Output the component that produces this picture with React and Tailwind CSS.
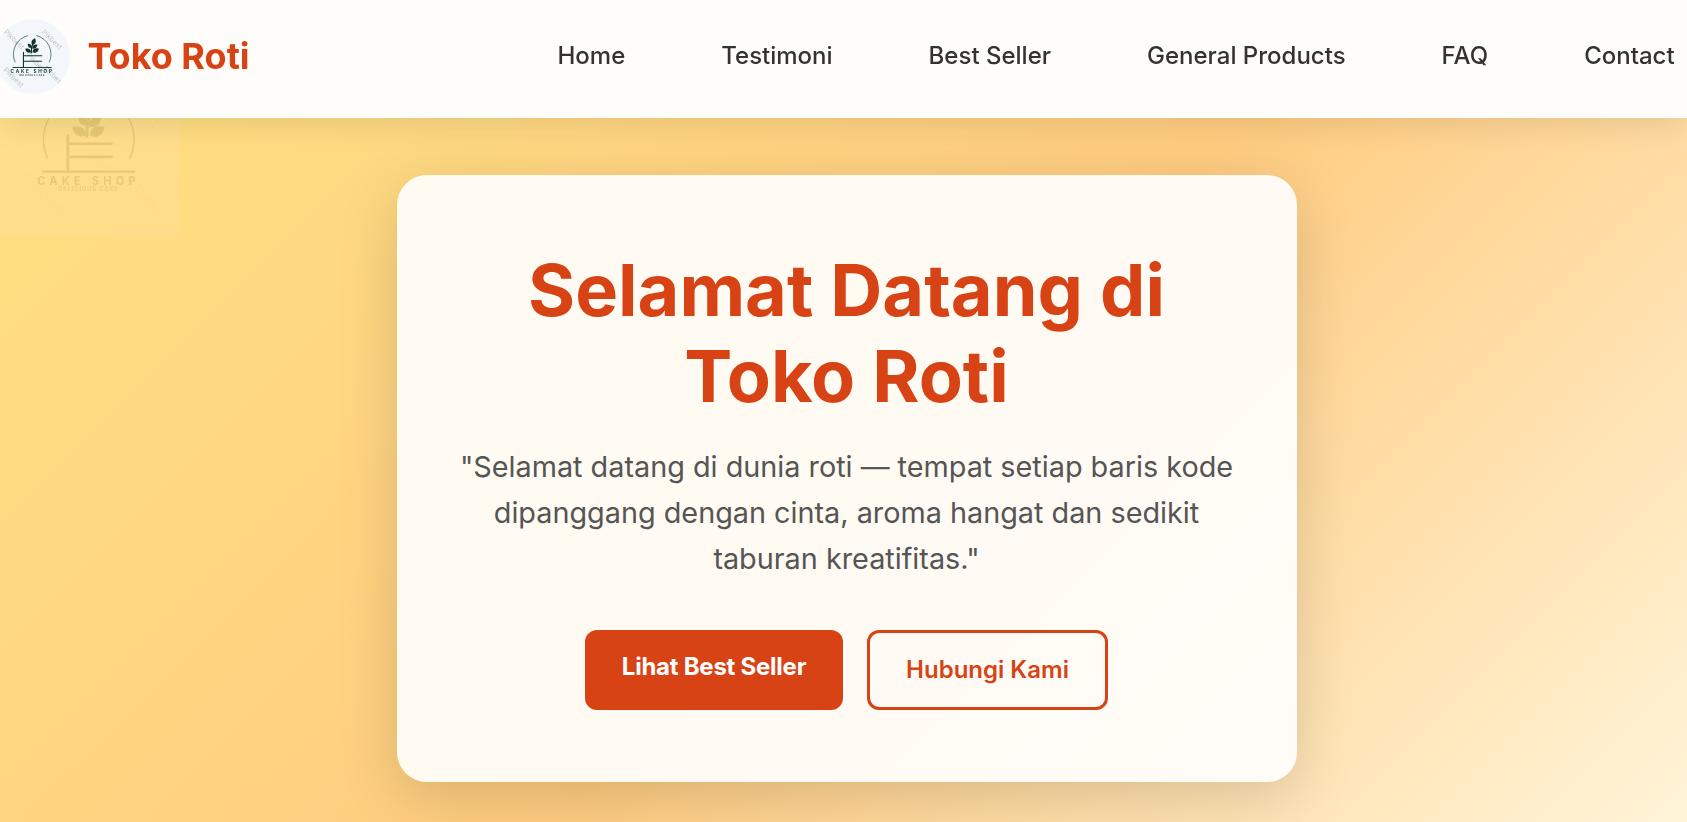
const links = ["Home", "Testimoni", "Best Seller", "General Products", "FAQ", "Contact"];

function Leaf({ x, y, r, s = 1 }) {
  return (
    <path
      d="M0 0C-6 -4 -6 -11 0 -16C6 -11 6 -4 0 0Z"
      transform={`translate(${x} ${y}) rotate(${r}) scale(${s})`}
      fill="currentColor"
    />
  );
}

function Mark({ x, y }) {
  return (
    <text transform={`translate(${x} ${y}) rotate(44)`} fontSize="17">
      Pikbest
    </text>
  );
}

function Logo({ className, markOpacity, background }) {
  return (
    <svg viewBox="0 0 178 178" className={className} fontFamily="Inter, sans-serif">
      <rect width="178" height="178" fill={background} />
      <g fill="#8a8f94" opacity={markOpacity}>
        <Mark x={20} y={32} />
        <Mark x={110} y={32} />
        <Mark x={19} y={122} />
        <Mark x={74} y={88} />
        <Mark x={114} y={118} />
      </g>
      <g fill="none" stroke="currentColor" strokeLinecap="round">
        <path d="M47.500 102A45 45 0 0 1 77 39.600M99 39.400A45 45 0 0 1 129 102" strokeWidth="1.500" />
        <path d="M67.500 79V115M67.500 87.300H111M67.500 100.300H111" strokeWidth="2.600" />
        <path d="M42.500 115H133.500" strokeWidth="2.300" />
        <path d="M86.500 80C86 72 87 64 90 58" strokeWidth="3" />
      </g>
      <Leaf x={88.5} y={62} r={22} s={1.08} />
      <Leaf x={87} y={69} r={-42} s={0.85} />
      <Leaf x={88.5} y={70} r={52} s={0.95} />
      <Leaf x={85.5} y={79} r={-58} s={1} />
      <Leaf x={89} y={79} r={61} s={1.08} />
      <text x="37" y="127.800" fontSize="11" fontWeight="700" textLength="98" fill="currentColor">
        CAKE SHOP
      </text>
      <text x="58" y="134.500" fontSize="5.600" fontWeight="600" textLength="59" fill="currentColor">
        DELICIOUS CAKE
      </text>
    </svg>
  );
}

export default function App() {
  return (
    <div className="flex h-[822px] flex-col overflow-hidden font-['Inter',sans-serif]">
      <header className="relative z-10 flex h-[118px] shrink-0 items-center justify-between bg-[#fffdfa] pr-[12.4px] pb-[6px] shadow-[0_6px_30px_rgba(0,0,0,0.1)]">
        <div className="-ml-[5px] flex items-center gap-[17.4px]">
          <Logo className="size-[75px] rounded-full text-[#12352c]" markOpacity={0.5} background="#f3f7fb" />
          <span className="text-[36px] font-bold text-[#d84315]">Toko Roti</span>
        </div>
        <nav className="flex gap-24 text-2xl font-medium text-[#333]">
          {links.map((l) => (
            <a key={l}>{l}</a>
          ))}
        </nav>
      </header>
      <section className="relative h-[822px] shrink-0 bg-[linear-gradient(135deg,#ffe082_0%,#ffcc80_50%,#fff8e1_100%)] pt-[57px] pl-[396.5px]">
        <Logo className="absolute -top-[62px] left-0 size-[179px] text-[#3d3a1e] opacity-12" markOpacity={0.25} background="#ffe6d2" />
        <main className="relative w-[900px] rounded-[30px] bg-white/90 px-[60px] py-[72px] text-center shadow-[0_15px_60px_rgba(0,0,0,0.15)]">
          <h1 className="mb-6 text-[72px] leading-[86.4px] font-bold text-[#d84315]">
            Selamat Datang di
            <br />
            Toko Roti
          </h1>
          <p className="mb-12 text-[28.8px] leading-[46.08px] text-[#555]">
            "Selamat datang di dunia roti — tempat setiap baris kode dipanggang dengan cinta, aroma hangat dan sedikit taburan kreatifitas."
          </p>
          <div className="flex justify-center gap-6 text-2xl leading-[38.4px] whitespace-nowrap">
            <a className="w-[258px] rounded-xl bg-[#d84315] py-[18px] font-bold tracking-[-0.25px] text-white">Lihat Best Seller</a>
            <a className="w-[241px] rounded-xl border-3 border-[#d84315] py-[18px] font-semibold text-[#d84315]">Hubungi Kami</a>
          </div>
        </main>
      </section>
    </div>
  );
}
